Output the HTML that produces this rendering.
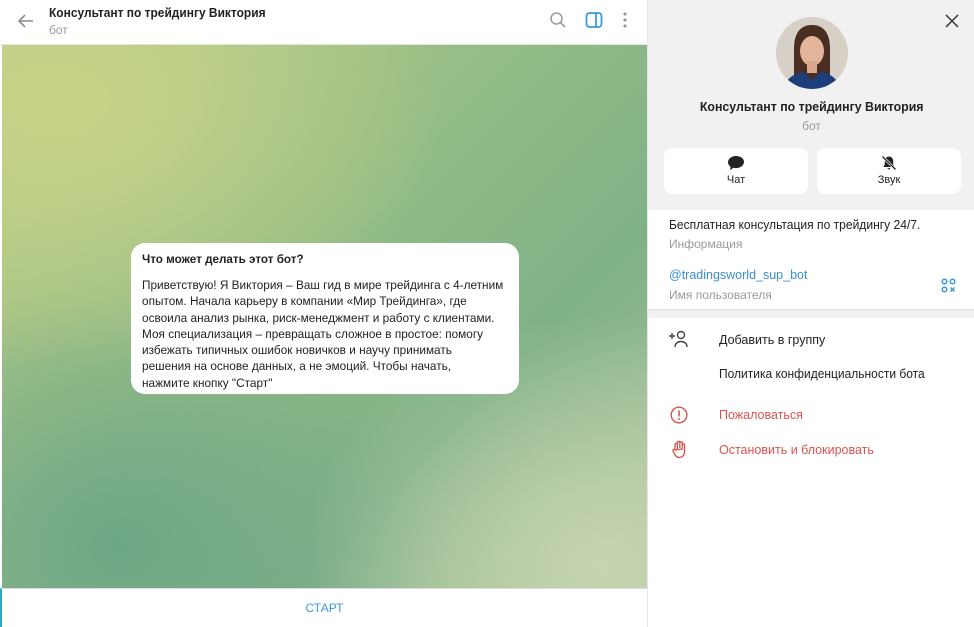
<!DOCTYPE html>
<html><head><meta charset="utf-8"><style>
*{margin:0;padding:0;box-sizing:border-box}
body{width:974px;height:627px;overflow:hidden;font-family:"Liberation Sans","Noto Sans CJK SC",sans-serif;background:#fff;position:relative;color:#222}
.abs{position:absolute}
.sx{display:inline-block;transform:scaleX(0.9);transform-origin:left top;white-space:nowrap}
#hdr{left:0;top:0;width:647px;height:45px;background:#fff;border-bottom:1px solid #e4e4e4}
#chat{left:2px;top:45px;width:645px;height:543px;background:
radial-gradient(ellipse 380px 260px at 60px 60px,#c8d388 0%,rgba(200,211,136,0) 100%),
radial-gradient(ellipse 300px 250px at 600px 520px,#c7d4b0 0%,rgba(199,212,176,0) 100%),
radial-gradient(ellipse 320px 260px at 120px 500px,#6ea787 0%,rgba(110,167,135,0) 100%),
linear-gradient(135deg,#b9cb86 0%,#92bc86 45%,#7fb187 70%,#aec7a0 100%)}
#bubble{left:131px;top:243px;width:388px;height:151px;background:#fff;border-radius:14px;padding:8px 11px;font-size:12.3px;line-height:16.3px}
#bot{left:0;top:588px;width:647px;height:39px;background:#fff;border-left:2px solid #2aa8c4;border-top:1px solid #dde}
#rp{left:647px;top:0;width:327px;height:627px;background:#fff;border-left:1px solid #e6e6e6}
.btn{position:absolute;top:148px;width:144px;height:46px;background:#fff;border-radius:8px;font-size:11px;text-align:center}
.row{position:absolute;left:71px;font-size:12.5px;white-space:nowrap}
</style></head><body>
<div id="hdr" class="abs">
<svg class="abs" style="left:16px;top:11px" width="20" height="20" viewBox="0 0 20 20"><path d="M17 10H3M9 4L3 10l6 6" stroke="#8c8c8c" stroke-width="1.6" fill="none"/></svg>
<div class="abs" style="left:49px;top:5px;font-size:13px;font-weight:bold;color:#222"><span class="sx" style="transform:scaleX(0.92)">Консультант по трейдингу Виктория</span></div>
<div class="abs" style="left:49px;top:23px;font-size:12px;color:#9a9a9a">бот</div>
<svg class="abs" style="left:549px;top:11px" width="18" height="18" viewBox="0 0 18 18"><circle cx="7.5" cy="7.5" r="5.5" stroke="#999" stroke-width="1.5" fill="none"/><path d="M11.5 11.5L16 16" stroke="#999" stroke-width="1.6"/></svg>
<svg class="abs" style="left:585px;top:11px" width="18" height="18" viewBox="0 0 18 18"><rect x="1.5" y="2" width="15" height="14" rx="3" stroke="#3a9ad9" stroke-width="1.8" fill="none"/><path d="M11 2v14" stroke="#3a9ad9" stroke-width="1.8"/></svg>
<svg class="abs" style="left:620px;top:11px" width="10" height="18" viewBox="0 0 10 18"><circle cx="5" cy="3" r="1.6" fill="#999"/><circle cx="5" cy="9" r="1.6" fill="#999"/><circle cx="5" cy="15" r="1.6" fill="#999"/></svg>
</div>
<div id="chat" class="abs"></div>
<div id="bubble" class="abs"><div style="font-weight:bold;margin-bottom:9px;line-height:17px"><span class="sx" style="transform:scaleX(0.95)">Что может делать этот бот?</span></div><span class="sx" style="transform:scaleX(0.96)">Приветствую! Я Виктория – Ваш гид в мире трейдинга с 4-летним<br>опытом. Начала карьеру в компании «Мир Трейдинга», где<br>освоила анализ рынка, риск-менеджмент и работу с клиентами.<br>Моя специализация – превращать сложное в простое: помогу<br>избежать типичных ошибок новичков и научу принимать<br>решения на основе данных, а не эмоций. Чтобы начать,<br>нажмите кнопку "Старт"</span></div>
<div id="bot" class="abs"><div style="position:absolute;left:0;width:645px;top:12px;text-align:center;font-size:12px;color:#3a9ad9">СТАРТ</div></div>
<div id="rp" class="abs">
<div class="abs" style="left:0;top:0;width:327px;height:210px;background:#f1f1f1"></div>
<svg class="abs" style="left:297px;top:14px" width="14" height="14" viewBox="0 0 14 14"><path d="M1 1l12 12M13 1L1 13" stroke="#333" stroke-width="1.5"/></svg>
<svg class="abs" style="left:128px;top:17px" width="72" height="72" viewBox="0 0 72 72"><defs><clipPath id="c"><circle cx="36" cy="36" r="36"/></clipPath></defs><g clip-path="url(#c)"><rect width="72" height="72" fill="#d6d0c6"/><path d="M18 70V32C18 14 26 8 36 8s18 6 18 24v38z" fill="#4a2e22"/><ellipse cx="36" cy="34" rx="12" ry="15" fill="#e3b69c"/><rect x="31" y="44" width="10" height="12" fill="#d9a88e"/><path d="M8 72c2-12 12-16 20-17l8 8 8-8c8 1 18 5 20 17z" fill="#1d3e7a"/></g></svg>
<div class="abs" style="left:0;width:327px;top:99px;text-align:center;font-size:13px;font-weight:bold"><span class="sx" style="transform:scaleX(0.95);transform-origin:center top">Консультант по трейдингу Виктория</span></div>
<div class="abs" style="left:0;width:327px;top:119px;text-align:center;font-size:12px;color:#9a9a9a">бот</div>
<div class="btn" style="left:16px"><svg style="margin-top:7px" width="18" height="16" viewBox="0 0 18 16"><path d="M9 1C4.5 1 1 3.8 1 7.2c0 1.8 1 3.4 2.6 4.5L3 15l3.6-2.2c.8.2 1.6.3 2.4.3 4.5 0 8-2.8 8-6.2S13.5 1 9 1z" fill="#222"/></svg><div>Чат</div></div>
<div class="btn" style="left:169px"><svg style="margin-top:7px" width="18" height="16" viewBox="0 0 18 16"><path d="M9 1.5c-2.5 0-4.2 2-4.2 4.5v3.5L3.3 12h11.4l-1.5-2.5V6c0-2.5-1.7-4.5-4.2-4.5zM7.3 13.3a1.8 1.8 0 003.4 0z" fill="#222"/><path d="M2.5 1.5l13 13" stroke="#fff" stroke-width="2.6"/><path d="M2.5 1.5l13 13" stroke="#222" stroke-width="1.3"/></svg><div>Звук</div></div>
<div class="abs" style="left:21px;top:218px;font-size:12.5px"><span class="sx" style="transform:scaleX(0.965)">Бесплатная консультация по трейдингу 24/7.</span></div>
<div class="abs" style="left:21px;top:237px;font-size:12px;color:#9a9a9a">Информация</div>
<div class="abs" style="left:21px;top:268px;font-size:12.5px;color:#3a8fd0">@tradingsworld_sup_bot</div>
<div class="abs" style="left:21px;top:288px;font-size:12px;color:#9a9a9a">Имя пользователя</div>
<svg class="abs" style="left:293px;top:278px" width="15" height="15" viewBox="0 0 15 15" fill="none" stroke="#3a9ad9" stroke-width="1.5"><circle cx="3.5" cy="3.5" r="2.3"/><circle cx="11.5" cy="3.5" r="2.3"/><circle cx="3.5" cy="11.5" r="2.3"/><path d="M9.5 9.5l4 4M13.5 9.5l-4 4"/></svg>
<div class="abs" style="left:0;top:309px;width:327px;height:9px;background:#f1f1f1;border-top:1px solid #e2e2e2"></div>
<svg class="abs" style="left:20px;top:330px" width="22" height="18" viewBox="0 0 22 18" fill="none" stroke="#444" stroke-width="1.4"><path d="M1 6h6M4 3v6"/><circle cx="13" cy="5" r="3.5"/><path d="M7 17c0-3.5 2.7-5.5 6-5.5s6 2 6 5.5"/></svg>
<div class="row" style="top:333px">Добавить в группу</div>
<div class="row" style="top:367px"><span class="sx" style="transform:scaleX(0.96)">Политика конфиденциальности бота</span></div>
<svg class="abs" style="left:22px;top:406px" width="18" height="18" viewBox="0 0 18 18"><circle cx="9" cy="9" r="7.8" stroke="#d9534f" stroke-width="1.4" fill="none"/><path d="M9 4.5v6" stroke="#d9534f" stroke-width="1.6"/><circle cx="9" cy="13" r="1" fill="#d9534f"/></svg>
<div class="row" style="top:408px;color:#d9534f">Пожаловаться</div>
<svg class="abs" style="left:23px;top:440px" width="18" height="19" viewBox="0 0 18 19" fill="none" stroke="#d9534f" stroke-width="1.3"><path d="M4 10V4.5a1.2 1.2 0 012.4 0V9M6.4 8V2.5a1.2 1.2 0 012.4 0V8M8.8 8V3a1.2 1.2 0 012.4 0V9M11.2 9V5a1.2 1.2 0 012.4 0v6.5c0 3.5-2.3 6-5.3 6-2.2 0-3.4-1.2-4.5-3L2 11a1.1 1.1 0 012-1z"/></svg>
<div class="row" style="top:443px;color:#d9534f">Остановить и блокировать</div>
</div>
</body></html>
